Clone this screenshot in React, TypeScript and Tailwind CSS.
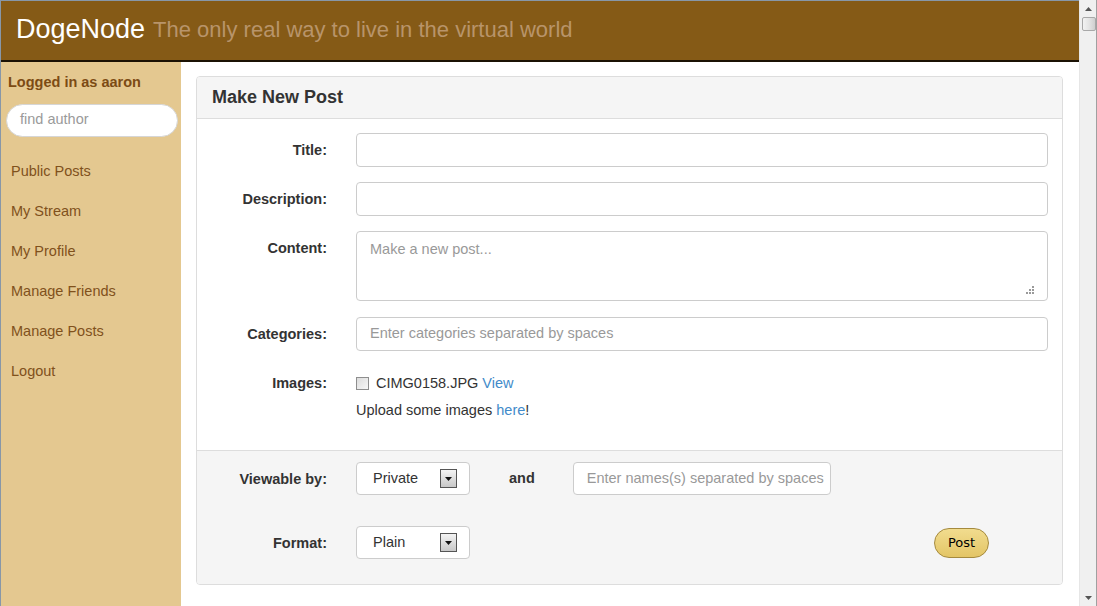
import React from "react";

const font = { fontFamily: '"Liberation Sans", Arial, sans-serif' };

function SelectBox({ value }: { value: string }) {
  return (
    <div className="flex h-[33px] w-[114px] items-center justify-between rounded-[4px] border border-[#cccccc] bg-white pl-[16px] pr-[12px] text-[14.5px] text-[#333]">
      <span>{value}</span>
      <span className="flex h-[19px] w-[17px] items-center justify-center border border-[#555] bg-gradient-to-b from-[#f4f4f4] to-[#c8c8c8]">
        <svg width="7" height="4" viewBox="0 0 7 4">
          <path d="M0 0 L7 0 L3.5 4 Z" fill="#111" />
        </svg>
      </span>
    </div>
  );
}

export default function App() {
  const navs = ["Public Posts", "My Stream", "My Profile", "Manage Friends", "Manage Posts", "Logout"];
  return (
    <div className="flex h-[606px] w-[1097px] overflow-hidden bg-white" style={font}>
      <div className="flex min-w-0 flex-1 flex-col border-l border-t border-[#8797a8]">
        <div className="flex h-[61px] shrink-0 items-center border-b-2 border-[#1b1204] bg-[#855a16] pl-[15px] pb-[2px]">
          <span className="text-[27px] leading-none text-white">DogeNode</span>
          <span className="ml-[8px] text-[22px] leading-none text-[#b8946a]">The only real way to live in the virtual world</span>
        </div>
        <div className="flex flex-1">
          <div className="flex w-[180px] flex-col bg-[#e4c890] pt-[10px]">
            <div className="pl-[7px] text-[14.5px] font-bold text-[#7c4b14]">Logged in as aaron</div>
            <div className="ml-[5px] mt-[10px] flex h-[33px] w-[172px] items-center rounded-full border border-[#d6d6d6] bg-white pl-[13px] text-[14.5px] text-[#9a9a9a]">
              find author
            </div>
            <div className="mt-[15px] flex flex-col pl-[10px]">
              {navs.map((n) => (
                <div key={n} className="flex h-[40px] items-center text-[14.5px] text-[#80511c]">
                  {n}
                </div>
              ))}
            </div>
          </div>
          <div className="flex-1 pl-[15px] pr-[16px] pt-[14px]">
            <div className="overflow-hidden rounded-[4px] border border-[#dddddd]">
              <div className="flex h-[42px] items-center border-b border-[#dddddd] bg-[#f5f5f5] pl-[15px] text-[18px] font-bold text-[#333]">
                Make New Post
              </div>
              <div className="pb-[30px] pr-[14px] pt-[14px] text-[14.5px] text-[#333]">
                <div className="grid grid-cols-[130px_1fr] gap-x-[29px]">
                  <div className="pt-[7px] text-right font-bold leading-[20px]">Title:</div>
                  <div className="h-[34px] rounded-[4px] border border-[#cccccc]" />
                </div>
                <div className="mt-[15px] grid grid-cols-[130px_1fr] gap-x-[29px]">
                  <div className="pt-[7px] text-right font-bold leading-[20px]">Description:</div>
                  <div className="h-[34px] rounded-[4px] border border-[#cccccc]" />
                </div>
                <div className="mt-[15px] grid grid-cols-[130px_1fr] gap-x-[29px]">
                  <div className="pt-[7px] text-right font-bold leading-[20px]">Content:</div>
                  <div className="relative h-[70px] rounded-[4px] border border-[#cccccc] px-[13px] pt-[7px] leading-[20px] text-[#999]">
                    Make a new post...
                    <svg className="absolute bottom-[5px] right-[12px]" width="10" height="10" viewBox="0 0 10 10">
                      <g fill="#9a9a9a">
                        <rect x="7" y="1" width="2" height="2" />
                        <rect x="4" y="4" width="2" height="2" />
                        <rect x="7" y="4" width="2" height="2" />
                        <rect x="1" y="7" width="2" height="2" />
                        <rect x="4" y="7" width="2" height="2" />
                        <rect x="7" y="7" width="2" height="2" />
                      </g>
                    </svg>
                  </div>
                </div>
                <div className="mt-[16px] grid grid-cols-[130px_1fr] gap-x-[29px]">
                  <div className="pt-[7px] text-right font-bold leading-[20px]">Categories:</div>
                  <div className="flex h-[34px] items-center rounded-[4px] border border-[#cccccc] px-[13px] text-[#999]">
                    Enter categories separated by spaces
                  </div>
                </div>
                <div className="mt-[22px] grid grid-cols-[130px_1fr] gap-x-[29px]">
                  <div className="text-right font-bold leading-[20px]">Images:</div>
                  <div className="leading-[20px]">
                    <div className="flex items-center">
                      <span className="mr-[7px] inline-block h-[13px] w-[13px] border border-[#8e8e8e] bg-gradient-to-br from-[#dcdcdc] to-[#f8f8f8]" />
                      <span>CIMG0158.JPG</span>
                      <span className="ml-[4px] text-[#428bca]">View</span>
                    </div>
                    <div className="mt-[7px]">
                      Upload some images <span className="text-[#428bca]">here</span>!
                    </div>
                  </div>
                </div>
              </div>
              <div className="border-t border-[#dddddd] bg-[#f5f5f5] pb-[25px] pt-[11px] text-[14.5px] text-[#333]">
                <div className="grid grid-cols-[130px_1fr] gap-x-[29px]">
                  <div className="pt-[7px] text-right font-bold leading-[20px]">Viewable by:</div>
                  <div className="flex items-center">
                    <SelectBox value="Private" />
                    <span className="ml-[39px] font-bold">and</span>
                    <div className="ml-[38px] flex h-[33px] w-[258px] items-center overflow-hidden whitespace-nowrap rounded-[4px] border border-[#cccccc] bg-white pl-[13px] text-[#999]">
                      Enter names(s) separated by spaces
                    </div>
                  </div>
                </div>
                <div className="mt-[31px] grid grid-cols-[130px_1fr] gap-x-[29px]">
                  <div className="pt-[7px] text-right font-bold leading-[20px]">Format:</div>
                  <div className="flex items-center">
                    <SelectBox value="Plain" />
                    <button className="ml-[464px] flex h-[30px] w-[55px] items-center justify-center rounded-full border border-[#a58a3e] bg-gradient-to-b from-[#f1dc8e] to-[#e3c566] text-black" style={{ fontFamily: '"DejaVu Sans", "Liberation Sans", sans-serif', fontSize: "13px" }}>
                      Post
                    </button>
                  </div>
                </div>
              </div>
            </div>
          </div>
        </div>
      </div>
      <div className="relative flex h-[606px] w-[18px] flex-col items-center border-l border-[#e6e6e6] bg-[#f0f0f0]">
        <div className="absolute right-0 top-0 h-full w-[1px] bg-[#a0a0a0]" />
        <svg className="mt-[7px]" width="7" height="4" viewBox="0 0 7 4">
          <path d="M3.5 0 L7 4 L0 4 Z" fill="#555" />
        </svg>
        <div className="mt-[6px] h-[14px] w-[14px] rounded-[2px] border border-[#a8a8a8] bg-gradient-to-r from-[#f2f2f2] via-[#e4e4e4] to-[#cfcfcf]" />
        <div className="flex-1" />
        <svg className="mb-[6px]" width="7" height="4" viewBox="0 0 7 4">
          <path d="M0 0 L7 0 L3.5 4 Z" fill="#555" />
        </svg>
      </div>
    </div>
  );
}
